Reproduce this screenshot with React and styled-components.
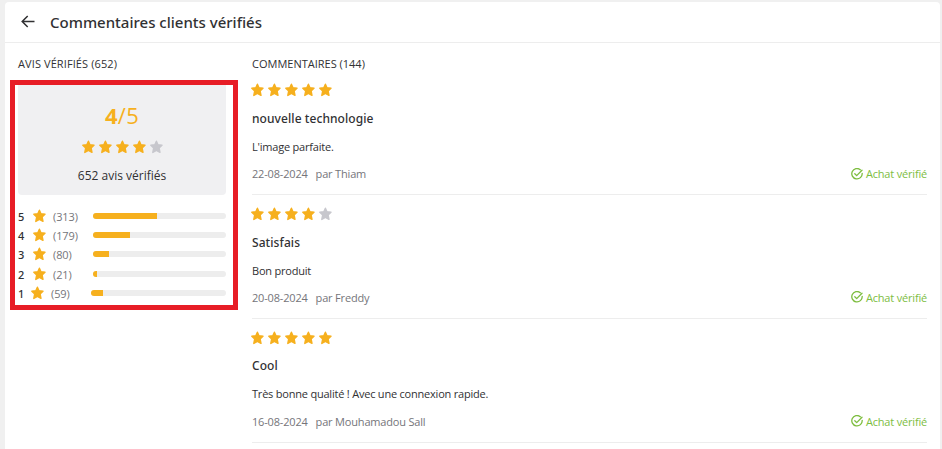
import styled, {createGlobalStyle} from "styled-components";

const GlobalStyle = createGlobalStyle`
    * {
        box-sizing: border-box;
    }

    body {
        margin: 0;
        overflow: hidden;
        background-color: #f0f0f0;
        color: #313133;
        font-family: "Open Sans", "Noto Sans", sans-serif;
    }

    h1, h2, h3, p, ul {
        margin: 0;
        padding: 0;
        font-weight: 400;
    }
`;

const Card = styled.main`
    width: 935px;
    height: 447px;
    margin: 2px 0 0 5px;
    overflow: hidden;
    background-color: #fff;
    border-radius: 4px 4px 0 0;
`;

const Header = styled.header`
    display: flex;
    align-items: center;
    height: 41px;
    padding-left: 16px;
    border-bottom: 1px solid #ededed;
`;

const BackIcon = styled.svg`
    width: 14px;
    height: 14px;
    margin-right: 15px;
    fill: none;
    stroke: #313133;
    stroke-width: 1.5;
`;

const Title = styled.h1`
    font-family: "Noto Sans", "Open Sans", sans-serif;
    font-size: 15px;
    font-weight: 500;
    line-height: 20px;
    white-space: nowrap;
`;

const Columns = styled.div`
    display: grid;
    grid-template-columns: 208px 675px;
    column-gap: 26px;
    padding-left: 13px;
`;

const SectionTitle = styled.h2`
    height: ${({$tight}) => $tight ? 28.3 : 28}px;
    padding-top: 13px;
    font-size: 11px;
    line-height: 16px;
    letter-spacing: ${({$tight}) => $tight ? "0" : "0.1px"};
    white-space: nowrap;
`;

const Ratings = styled.section`
    position: relative;
`;

const Highlight = styled.div`
    position: absolute;
    top: 37px;
    left: -8px;
    width: 228px;
    height: 230px;
    border: 5px solid #e71d26;
`;

const Summary = styled.div`
    display: flex;
    flex-direction: column;
    align-items: center;
    height: 114px;
    margin-top: 10px;
    padding-top: 19px;
    background-color: #f0f0f2;
    border-radius: 4px;
`;

const Score = styled.div`
    color: #f6b01e;
    font-size: 22px;
    line-height: 30px;
    margin-bottom: 10px;
    letter-spacing: 0.3px;

    b {
        font-weight: 700;
    }
`;

const StarRow = styled.div`
    display: flex;
    gap: 3px;
    height: 14px;
`;

const StarSvg = styled.svg`
    display: block;
    flex: none;
    width: 14px;
    height: 14px;
    color: ${({$on}) => $on ? "#f6b01e" : "#c7c7cd"};
    fill: currentColor;
    stroke: currentColor;
    stroke-width: 1.4;
    stroke-linejoin: round;
`;

const SummaryText = styled.p`
    margin-top: 13px;
    font-size: 12px;
    line-height: 18px;
`;

const Distribution = styled.ul`
    margin-top: 12px;
    list-style: none;
`;

const Level = styled.li`
    display: flex;
    align-items: center;
    height: 19.2px;
    font-size: 11px;

    ${StarSvg} {
        margin-bottom: 1px;
    }
`;

const LevelNumber = styled.span`
    width: ${({$narrow}) => $narrow ? 11.5 : 13.5}px;
    font-family: "Noto Sans", "Open Sans", sans-serif;
    font-weight: 500;
`;

const LevelCount = styled.span`
    width: 40px;
    margin-left: 7.5px;
    color: #75757a;
    letter-spacing: -0.1px;
`;

const Track = styled.div`
    flex: 1;
    height: 6px;
    margin-bottom: 1px;
    overflow: hidden;
    background-color: #ededed;
    border-radius: 3px;
`;

const Fill = styled.div`
    height: 100%;
    background-color: #f6b01e;
`;

const Review = styled.article`
    height: 123.75px;
    padding-top: 12px;
    border-bottom: 1px solid #ededed;

    ${StarRow} {
        margin-left: -1.7px;
    }
`;

const ReviewTitle = styled.h3`
    margin-top: 12.65px;
    font-family: "Noto Sans", "Open Sans", sans-serif;
    font-size: 12px;
    font-weight: 500;
    line-height: 18px;
    letter-spacing: 0.08px;
`;

const ReviewText = styled.p`
    margin-top: 11px;
    font-size: 11px;
    line-height: 16px;
    letter-spacing: -0.21px;
`;

const Meta = styled.div`
    display: flex;
    align-items: center;
    justify-content: space-between;
    height: 16px;
    margin-top: 10.75px;
    color: #75757a;
    font-size: 11px;
    letter-spacing: -0.18px;
`;

const Author = styled.span`
    margin-left: 8px;
`;

const Verified = styled.span`
    display: flex;
    align-items: center;
    gap: 3px;
    color: #7dbd3f;
`;

const CheckIcon = styled.svg`
    width: 12px;
    height: 12px;
    fill: none;
    stroke: currentColor;
    stroke-width: 1.3;
    stroke-linecap: round;
    stroke-linejoin: round;
`;

const levels = [
    {stars: 5, count: 313},
    {stars: 4, count: 179},
    {stars: 3, count: 80},
    {stars: 2, count: 21},
    {stars: 1, count: 59},
];

const total = 652;

const reviews = [
    {stars: 5, title: "nouvelle technologie", text: "L'image parfaite.", date: "22-08-2024", author: "Thiam"},
    {stars: 4, title: "Satisfais", text: "Bon produit", date: "20-08-2024", author: "Freddy"},
    {
        stars: 5,
        title: "Cool",
        text: "Très bonne qualité ! Avec une connexion rapide.",
        date: "16-08-2024",
        author: "Mouhamadou Sall"
    },
];

const Star = ({on = true}) => (
    <StarSvg $on={on} viewBox="0 0 14 14">
        <path d="M7.4 1.2 9 4.8 13 5.2 10.1 7.9 11 12.4 7.4 10.4 3.8 12.4 4.7 7.9 1.8 5.2 5.8 4.8Z"/>
    </StarSvg>
);

const Stars = ({value}) => (
    <StarRow>
        {[1, 2, 3, 4, 5].map((n) => <Star key={n} on={n <= value}/>)}
    </StarRow>
);

const App = () => {
    return (
        <>
            <GlobalStyle/>
            <Card>
                <Header>
                    <BackIcon viewBox="0 0 14 14">
                        <path d="M13.5 6.5H1.2M6.7 1 1.2 6.5 6.7 12"/>
                    </BackIcon>
                    <Title>Commentaires clients vérifiés</Title>
                </Header>
                <Columns>
                    <Ratings>
                        <SectionTitle>AVIS VÉRIFIÉS (652)</SectionTitle>
                        <Summary>
                            <Score><b>4</b>/5</Score>
                            <Stars value={4}/>
                            <SummaryText>652 avis vérifiés</SummaryText>
                        </Summary>
                        <Distribution>
                            {levels.map(({stars, count}) => (
                                <Level key={stars}>
                                    <LevelNumber $narrow={stars === 1}>{stars}</LevelNumber>
                                    <Star/>
                                    <LevelCount>({count})</LevelCount>
                                    <Track>
                                        <Fill style={{width: `${count / total * 100}%`}}/>
                                    </Track>
                                </Level>
                            ))}
                        </Distribution>
                        <Highlight/>
                    </Ratings>
                    <section>
                        <SectionTitle $tight>COMMENTAIRES (144)</SectionTitle>
                        {reviews.map(({stars, title, text, date, author}) => (
                            <Review key={date}>
                                <Stars value={stars}/>
                                <ReviewTitle>{title}</ReviewTitle>
                                <ReviewText>{text}</ReviewText>
                                <Meta>
                                    <span>{date}<Author>par {author}</Author></span>
                                    <Verified>
                                        <CheckIcon viewBox="0 0 12 12">
                                            <path d="M9.3 1.7A5.2 5.2 0 1 0 11.2 5.4M3.8 5.7 5.7 7.6 11 2.3"/>
                                        </CheckIcon>
                                        Achat vérifié
                                    </Verified>
                                </Meta>
                            </Review>
                        ))}
                    </section>
                </Columns>
            </Card>
        </>
    );
};

export default App;
